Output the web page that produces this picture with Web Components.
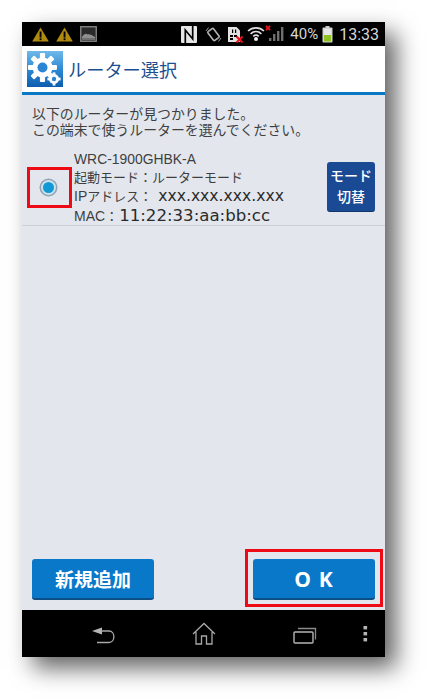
<!DOCTYPE html>
<html lang="ja">
<head>
<meta charset="utf-8">
<style>
  html, body { margin: 0; padding: 0; background: #fff; }
  body { width: 427px; height: 699px; overflow: hidden; font-family: "Noto Sans CJK JP", "Roboto", sans-serif; }
</style>
</head>
<body>
<phone-frame>
  <status-bar slot="status"></status-bar>
  <app-header slot="header" title="ルーター選択"></app-header>
  <router-page slot="page"></router-page>
  <nav-bar slot="nav"></nav-bar>
</phone-frame>

<script>
const frameTemplate = document.createElement('template');
frameTemplate.innerHTML = `
<style>
  :host { display: block; padding: 22px 42px 42px 22px; }
  .phone {
    width: 363px;
    height: 635px;
    display: flex;
    flex-direction: column;
    background: #e3e7ed;
    box-shadow: 11px 11px 22px rgba(0,0,0,.62);
  }
  ::slotted([slot=page]) { flex: 1; }
</style>
<div class="phone">
  <slot name="status"></slot>
  <slot name="header"></slot>
  <slot name="page"></slot>
  <slot name="nav"></slot>
</div>`;
class PhoneFrame extends HTMLElement {
  constructor() {
    super();
    this.attachShadow({ mode: 'open' }).appendChild(frameTemplate.content.cloneNode(true));
  }
}
customElements.define('phone-frame', PhoneFrame);

const statusTemplate = document.createElement('template');
statusTemplate.innerHTML = `
<style>
  :host { display: flex; align-items: center; height: 24px; background: #000; color: #d6d6d6; padding: 0 6px 0 10px; font-family: "Roboto", sans-serif; }
  .left { display: flex; align-items: center; gap: 7px; flex: 1; }
  .right { display: flex; align-items: center; }
  svg { display: block; flex: none; }
  .pct { font-size: 15px; margin-left: 6px; margin-right: 4px; }
  .time { font-size: 16px; margin-left: 6px; }
</style>
<div class="left">
  <svg width="17" height="15" viewBox="0 0 17 15"><path d="M8.5 0.5 L16.8 14.5 H0.2 Z" fill="#b08a10"/><rect x="7.6" y="4.5" width="1.9" height="6" fill="#000"/><rect x="7.6" y="11.3" width="1.9" height="1.9" fill="#000"/></svg>
  <svg width="17" height="15" viewBox="0 0 17 15"><path d="M8.5 0.5 L16.8 14.5 H0.2 Z" fill="#b08a10"/><rect x="7.6" y="4.5" width="1.9" height="6" fill="#000"/><rect x="7.6" y="11.3" width="1.9" height="1.9" fill="#000"/></svg>
  <svg width="17" height="16" viewBox="0 0 17 16"><rect x=".75" y=".75" width="15.5" height="14.5" fill="#2a2a2a" stroke="#8a8a8a" stroke-width="1.3"/><path d="M2 12 L2 11 C4 8 6 7 7.5 8.5 C9 7.5 12 9 15 11 V12 Z" fill="#8f8f8f"/><rect x="2" y="12" width="13" height="2" fill="#6f6f6f"/></svg>
</div>
<div class="right">
  <svg width="16" height="17" viewBox="0 0 16 17"><rect width="16" height="17" rx="1" fill="#e6e6e6"/><path d="M4.3 17 V4 L11.7 13 V0" stroke="#000" stroke-width="1.7" fill="none"/></svg>
  <svg width="17" height="17" viewBox="0 0 17 17" style="margin-left:8px"><rect x="5" y="3" width="7" height="11" rx="1" transform="rotate(-38 8.5 8.5)" fill="none" stroke="#b5b5b5" stroke-width="1.6"/><path d="M1 5 L3.5 1.5 M2.8 6.5 L5 3.5 M16 12 L13.5 15.5 M14.2 10.5 L12 13.5" stroke="#9a9a9a" stroke-width="1"/></svg>
  <svg width="17" height="17" viewBox="0 0 17 17" style="margin-left:5px"><path d="M1 1 H9.5 L13 4.5 V16 H1 Z" fill="#e2e2e2"/><rect x="3" y="9" width="3" height="2" fill="#000"/><rect x="7" y="9" width="3" height="2" fill="#000"/><rect x="3" y="12" width="3" height="2" fill="#000"/><rect x="5" y="3.5" width="1.2" height="3.5" fill="#000"/><rect x="8" y="3.5" width="1.2" height="3.5" fill="#000"/><path d="M9.5 10.5 L15.5 16.5 M15.5 10.5 L9.5 16.5" stroke="#e8141c" stroke-width="2"/></svg>
  <svg width="18" height="16" viewBox="0 0 18 16" style="margin-left:3px"><g fill="none" stroke="#e2e2e2" stroke-width="1.6"><path d="M1 5 C5.5 .8 12.5 .8 17 5"/><path d="M3.6 7.8 C6.8 4.9 11.2 4.9 14.4 7.8"/><path d="M6.2 10.3 C8 8.8 10 8.8 11.8 10.3"/></g><circle cx="9" cy="13" r="2" fill="#f2f2f2"/></svg>
  <svg width="19" height="18" viewBox="0 0 19 18"><path d="M1 1 L5 5 M5 1 L1 5" stroke="#e8141c" stroke-width="1.8"/><rect x="4" y="13" width="2.4" height="3" fill="#6f6f6f"/><rect x="8" y="9" width="2.4" height="7" fill="#6f6f6f"/><rect x="12" y="6" width="2.4" height="10" fill="#6f6f6f"/><rect x="16" y="2" width="2.4" height="14" fill="#6f6f6f"/></svg>
  <span class="pct">40%</span>
  <svg width="11" height="17" viewBox="0 0 11 17"><rect x="3.5" y="0" width="4" height="2" fill="#c9c9c9"/><rect x=".5" y="1.5" width="10" height="15" rx="1" fill="#d4d4d4"/><rect x="2" y="9" width="7" height="6.5" fill="#8fc31f"/><rect x="2" y="3" width="7" height="6" fill="#e7e7e7"/></svg>
  <span class="time">13:33</span>
</div>`;
class StatusBar extends HTMLElement {
  constructor() {
    super();
    this.attachShadow({ mode: 'open' }).appendChild(statusTemplate.content.cloneNode(true));
  }
}
customElements.define('status-bar', StatusBar);

const headerTemplate = document.createElement('template');
headerTemplate.innerHTML = `
<style>
  :host { display: flex; align-items: center; height: 46px; background: #fff; border-bottom: 3px solid #0a78c4; padding-left: 5px; gap: 5px; box-sizing: content-box; }
  svg { display: block; }
  h1 { margin: 0; font: 400 18.2px "Noto Sans CJK JP", sans-serif; color: #1b4f91; }
</style>
<svg width="36" height="36" viewBox="0 0 36 36">
  <defs><linearGradient id="g" x1="0" y1="0" x2="0" y2="1"><stop offset="0" stop-color="#6fb8ea"/><stop offset=".55" stop-color="#2a86d2"/><stop offset="1" stop-color="#0e5cae"/></linearGradient></defs>
  <rect width="36" height="36" fill="url(#g)"/>
  <g fill="#fff" transform="translate(15.5 16.5)">
    <circle r="10"/>
    <rect x="-2.6" y="-14.5" width="5.2" height="29" rx="1"/><rect x="-2.6" y="-14.5" width="5.2" height="29" rx="1" transform="rotate(45)"/><rect x="-2.6" y="-14.5" width="5.2" height="29" rx="1" transform="rotate(90)"/><rect x="-2.6" y="-14.5" width="5.2" height="29" rx="1" transform="rotate(135)"/>
  </g>
  <circle cx="15.5" cy="16.5" r="5" fill="#2a86d2"/>
  <g fill="#fff" transform="translate(27 28)"><circle r="5"/><rect x="-1.4" y="-6.6" width="2.8" height="13.2"/><rect x="-6.6" y="-1.4" width="13.2" height="2.8"/></g>
  <circle cx="27" cy="28" r="2.2" fill="#2a86d2"/>
</svg>
<h1></h1>`;
class AppHeader extends HTMLElement {
  constructor() {
    super();
    this.attachShadow({ mode: 'open' }).appendChild(headerTemplate.content.cloneNode(true));
    this.shadowRoot.querySelector('h1').textContent = this.getAttribute('title');
  }
}
customElements.define('app-header', AppHeader);

const buttonTemplate = document.createElement('template');
buttonTemplate.innerHTML = `
<style>
  :host { display: flex; align-items: center; justify-content: center; box-sizing: border-box; width: 122px; height: 41px; background: #0a78c8; border-bottom: 2px solid #0b4f86; border-radius: 3px; color: #fff; font: 700 19px "Noto Sans CJK JP", sans-serif; text-align: center; }
  :host([variant=navy]) { width: 48px; height: 50px; background: #1a4a94; border-bottom: 1px solid #123468; font: 500 14px/20.5px "Liberation Sans", "Noto Sans CJK JP", sans-serif; }
  :host([variant=ok]) { font: 700 21px "Open Sans", sans-serif; letter-spacing: 8px; padding-left: 7px; }
</style>
<span><slot></slot></span>`;
class AppButton extends HTMLElement {
  constructor() {
    super();
    this.attachShadow({ mode: 'open' }).appendChild(buttonTemplate.content.cloneNode(true));
  }
}
customElements.define('app-button', AppButton);

const routerTemplate = document.createElement('template');
routerTemplate.innerHTML = `
<style>
  :host { display: flex; align-items: center; height: 76px; border-bottom: 1px solid #ccd0d6; color: #3f3f3f; position: relative; }
  .radio { width: 52px; display: flex; justify-content: center; box-sizing: border-box; }
  .dot { width: 11px; height: 11px; border-radius: 50%; background: #0f9ad6; border: 2.5px solid #cfe0ea; box-shadow: 0 0 0 1.5px #8ea4b3; }
  .info { flex: 1; align-self: flex-start; padding-top: 1px; font: 400 13px "Liberation Sans", "Noto Sans CJK JP", sans-serif; white-space: nowrap; }
  .model { height: 18px; line-height: 18px; font-size: 13.9px; }
  .mode { height: 19px; line-height: 19px; }
  .ipline { height: 19px; line-height: 19px; }
  .macline { height: 20px; line-height: 20px; }
  .latin { font-size: 14px; }
  .ip { font: 400 15.6px "DejaVu Sans", sans-serif; margin-left: 6px; color: #2a2a2a; }
  .mac { font: 400 16.6px "DejaVu Sans", sans-serif; margin-left: 1px; color: #2a2a2a; }
  app-button { margin-right: 10px; margin-top: 0; }
  .mark { position: absolute; left: 5px; top: 18px; width: 45px; height: 41px; box-sizing: border-box; border: 3px solid #ee0a14; }
</style>
<div class="radio"><div class="dot"></div></div>
<div class="info">
  <div class="model"><slot name="model"></slot></div>
  <div class="mode"><slot name="mode"></slot></div>
  <div class="ipline"><span class="latin">IP</span>アドレス：<span class="ip"><slot name="ip"></slot></span></div>
  <div class="macline"><span class="latin">MAC</span>：<span class="mac"><slot name="mac"></slot></span></div>
</div>
<app-button variant="navy">モード<br>切替</app-button>
<div class="mark"></div>`;
class RouterRow extends HTMLElement {
  constructor() {
    super();
    this.attachShadow({ mode: 'open' }).appendChild(routerTemplate.content.cloneNode(true));
  }
}
customElements.define('router-row', RouterRow);

const pageTemplate = document.createElement('template');
pageTemplate.innerHTML = `
<style>
  :host { display: flex; flex-direction: column; background: #e3e7ed; position: relative; }
  p { margin: 0; padding: 11px 10px 0; height: 43px; font: 400 13.9px/16px "Liberation Sans", "Noto Sans CJK JP", sans-serif; color: #3f3f3f; white-space: nowrap; }
  .spacer { flex: 1; }
  .actions { display: flex; justify-content: space-between; padding: 0 10px 10px; }
  .mark { position: absolute; left: 223px; bottom: 3px; width: 138px; height: 58px; box-sizing: border-box; border: 3px solid #ee0a14; }
</style>
<p>以下のルーターが見つかりました。<br>この端末で使うルーターを選んでください。</p>
<router-row>
  <span slot="model">WRC-1900GHBK-A</span>
  <span slot="mode">起動モード：ルーターモード</span>
  <span slot="ip">xxx.xxx.xxx.xxx</span>
  <span slot="mac">11:22:33:aa:bb:cc</span>
</router-row>
<div class="spacer"></div>
<div class="actions">
  <app-button>新規追加</app-button>
  <app-button variant="ok">OK</app-button>
</div>
<div class="mark"></div>`;
class RouterPage extends HTMLElement {
  constructor() {
    super();
    this.attachShadow({ mode: 'open' }).appendChild(pageTemplate.content.cloneNode(true));
  }
}
customElements.define('router-page', RouterPage);

const navTemplate = document.createElement('template');
navTemplate.innerHTML = `
<style>
  :host { display: flex; align-items: center; height: 47px; background: #000; padding-left: 69px; }
  svg { display: block; flex: none; }
</style>
<svg width="26" height="20" viewBox="0 0 26 20" style="margin-top:5px"><path d="M1 5 L11 1.5 V8.5 Z" fill="#b5b5b5"/><path d="M10 5 H18 C24.5 5 24.5 16.5 18 16.5 H6" fill="none" stroke="#a8a8a8" stroke-width="1.3"/></svg>
<svg width="24" height="24" viewBox="0 0 24 24" style="margin-left:75px"><path d="M1 12 L12 1.5 L23 12 M4 10 V22 H9.5 V14 H14.5 V22 H20 V10" fill="none" stroke="#a8a8a8" stroke-width="1.3"/></svg>
<svg width="24" height="17" viewBox="0 0 24 17" style="margin-left:77px;margin-top:4px"><rect x="1" y="5" width="19" height="11" rx="1" fill="none" stroke="#b5b5b5" stroke-width="1.4"/><path d="M5 1.5 H22.5 V12.5" fill="none" stroke="#8a8a8a" stroke-width="1.3"/></svg>
<svg width="5" height="16" viewBox="0 0 5 16" style="margin-left:46px;margin-top:1px"><rect x=".5" width="3.6" height="3.4" fill="#b5b5b5"/><rect x=".5" y="6" width="3.6" height="3.4" fill="#b5b5b5"/><rect x=".5" y="12" width="3.6" height="3.4" fill="#b5b5b5"/></svg>`;
class NavBar extends HTMLElement {
  constructor() {
    super();
    this.attachShadow({ mode: 'open' }).appendChild(navTemplate.content.cloneNode(true));
  }
}
customElements.define('nav-bar', NavBar);
</script>
</body>
</html>
